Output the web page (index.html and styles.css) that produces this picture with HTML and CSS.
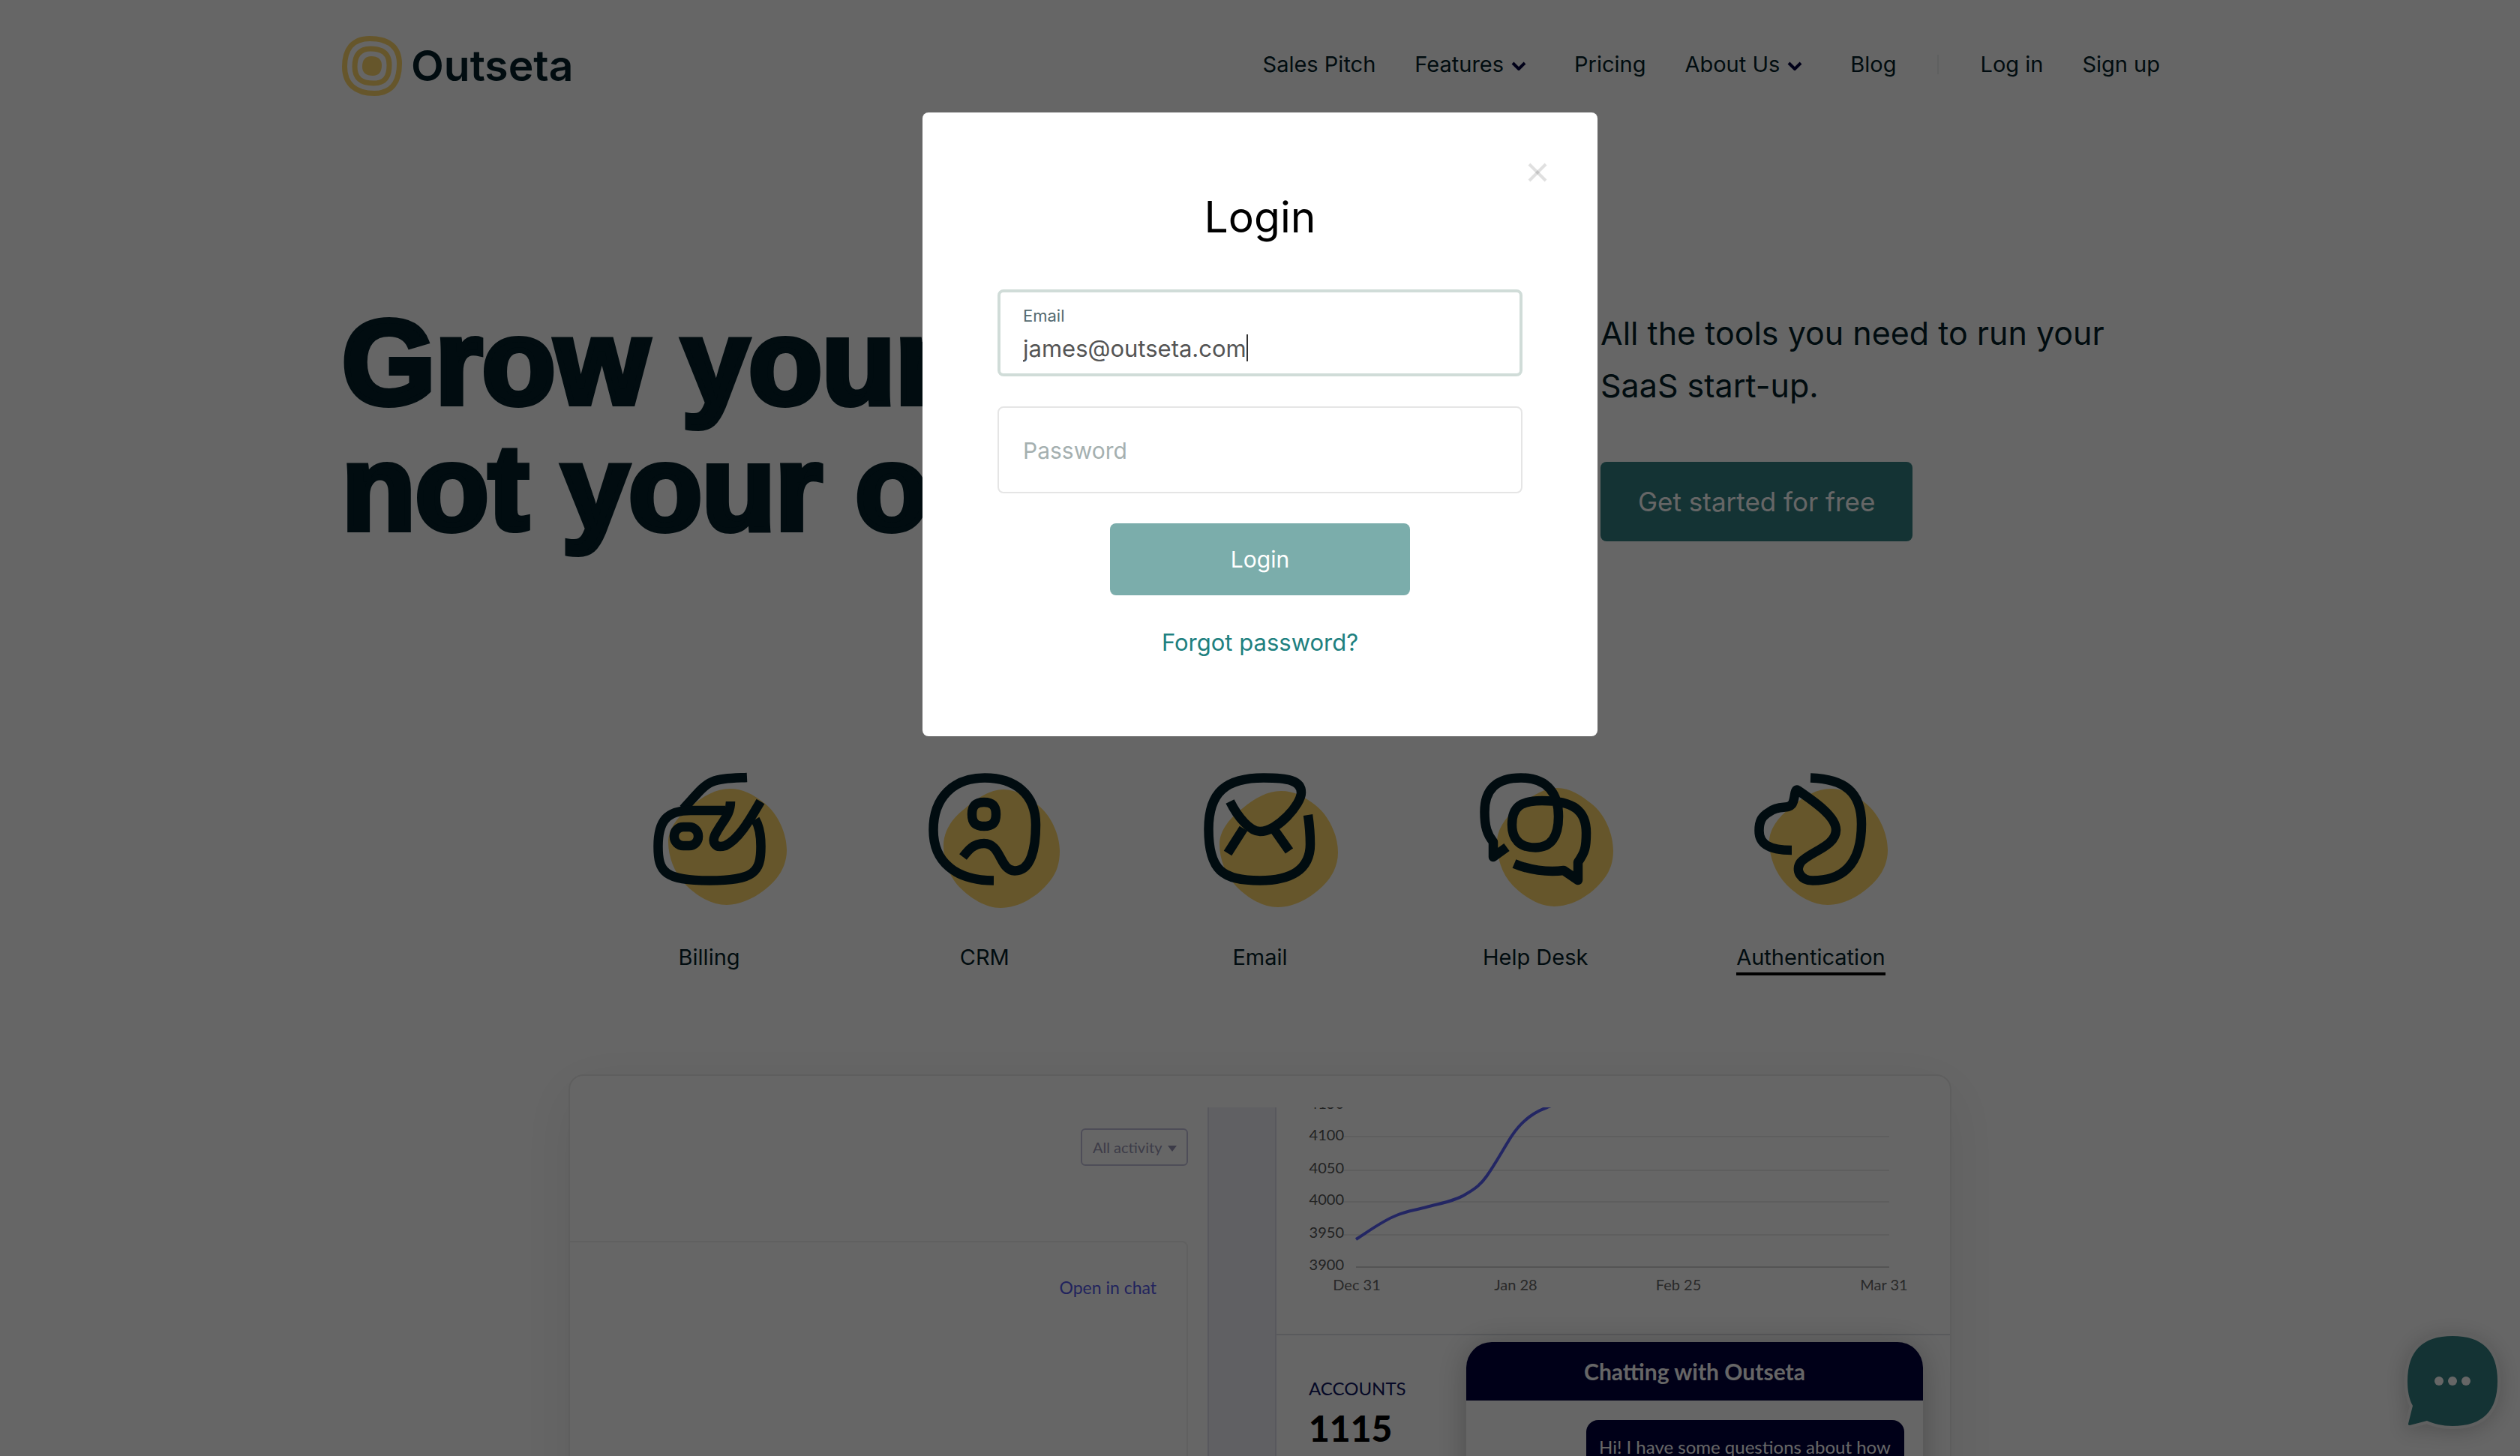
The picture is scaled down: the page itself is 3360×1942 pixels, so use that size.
FILE: index.html
```html
<!DOCTYPE html>
<html lang="en">
<head>
<meta charset="utf-8">
<meta name="viewport" content="width=device-width, initial-scale=1">
<title>Outseta</title>
<link rel="stylesheet" href="styles.css">
</head>
<body>
<div class="page">
  <header class="header">
    <a class="logo" href="#">
      <svg class="logo-mark" viewBox="0 0 80 80" fill="none" stroke="#ffd76b" stroke-width="7" aria-hidden="true">
        <path d="M37 3.500C62 3.500 76.500 14 76.500 37C76.500 62 66 76.500 43 76.500C18 76.500 3.500 64 3.500 41C3.500 18 14 3.500 37 3.500Z"/>
        <path d="M38 17C55 17 63 24 63 39C63 55 57 63 42 63C25 63 17 56 17 41C17 25 24 17 38 17Z"/>
        <path d="M39 27C48 27 53 31 53 39C53 48 49 53 41 53C32 53 27 49 27 41C27 32 31 27 39 27Z" fill="#ffd76b" stroke="none"/>
      </svg>
      <span>Outseta</span>
    </a>
    <nav class="nav">
      <a href="#">Sales Pitch</a>
      <a class="has-menu" href="#">Features <svg class="chevron" viewBox="0 0 20 12" aria-hidden="true"><path d="M2 2L10 10L18 2"/></svg></a>
      <a href="#">Pricing</a>
      <a class="has-menu" href="#">About Us <svg class="chevron" viewBox="0 0 20 12" aria-hidden="true"><path d="M2 2L10 10L18 2"/></svg></a>
      <a href="#">Blog</a>
      <span class="nav-divider"></span>
      <a href="#">Log in</a>
      <a href="#">Sign up</a>
    </nav>
  </header>

  <main>
    <section class="hero">
      <h1 class="hero-title">Grow your start-up,<br>not your overhead.</h1>
      <div class="hero-aside">
        <p class="hero-text">All the tools you need to run your SaaS start-up.</p>
        <a class="cta" href="#">Get started for free</a>
      </div>
    </section>

    <nav class="tabs">
      <a class="tab" href="#">
        <svg class="tab-icon" viewBox="0 0 150 150" aria-hidden="true">
          <path class="blob" d="M102 21C120 21 134 29 148 40C166 54 178 80 178 103C178 117 173 130 164 141C148 160 122 176 98 176C78 176 58 164 43 149C28 133 20 112 20 92C20 73 35 56 51 44C66 31 84 21 102 21Z"/>
          <path d="M125 6C105 7 90 7 78 12C66 17 56 31 40 48"/>
          <path d="M96 50H50C18 50 6.500 64 6.500 98C6.500 132 15 143.500 75 143.500C135 143.500 143.500 132 143.500 98C143.500 84 142 72 136 62"/>
          <rect x="28" y="72" width="32" height="25" rx="12"/>
          <path d="M103 38C103 55 94 62 85 78C76 92 82 101 96 97C115 88 130 60 143 38"/>
        </svg>
        <span class="tab-label">Billing</span>
      </a>
      <a class="tab" href="#">
        <svg class="tab-icon" viewBox="0 0 150 150" aria-hidden="true">
          <path class="blob" transform="translate(-2 3)" d="M102 19C120 19 134 29 148 40C166 54 177 80 177 101C177 117 173 130 164 141C148 162 122 177 98 177C78 177 58 164 43 149C28 133 22 112 22 94C22 73 35 56 51 44C66 31 84 19 102 19Z"/>
          <path d="M87 143.500C35 143 6.500 118 6.500 76C6.500 33 33 6.500 75 6.500C115 6.500 143 28 143 69C143 100 137 130.500 115 130.500C95 130.500 97 94 74 94C60 94 53 103 46 112"/>
          <path d="M74 39C85 39 90 44 90 55C90 66 85 71 74 71C63 71 58 66 58 55C58 44 63 39 74 39Z"/>
        </svg>
        <span class="tab-label">CRM</span>
      </a>
      <a class="tab" href="#">
        <svg class="tab-icon" viewBox="0 0 150 150" aria-hidden="true">
          <path class="blob" transform="translate(1 3)" d="M102 21C120 21 134 29 148 40C166 54 178 80 178 103C178 117 173 130 164 141C148 160 122 176 98 176C78 176 58 164 43 149C28 133 20 112 20 92C20 73 35 56 51 44C66 31 84 21 102 21Z"/>
          <path d="M139 56C141 70 142 80 142 95C142 130 115 143.500 75 143.500C25 143.500 6.500 130 6.500 75C6.500 25 30 6.500 80 6.500C112 6.500 130 10 130 26C130 42 98 78 75 78C62 78 46 60 35 38"/>
          <path d="M53 74L32 107M95 77L114 104"/>
        </svg>
        <span class="tab-label">Email</span>
      </a>
      <a class="tab" href="#">
        <svg class="tab-icon" viewBox="0 0 150 150" aria-hidden="true">
          <path class="blob" transform="translate(2 1)" d="M102 19C120 19 134 29 148 40C166 54 177 80 177 103C177 117 173 130 164 141C148 162 122 177 98 177C78 177 58 164 43 149C28 133 22 112 22 92C22 73 35 56 51 44C66 31 84 19 102 19Z"/>
          <path d="M37 99L19 112V92C11 82 7.500 72 7.500 52C7.500 22 23 6.500 56 6.500C93 6.500 106 30 106 58C106 85 96 99.500 75 99.500C54 99.500 44 88 44 69C44 45 56 37 84 37C126 37 143 50 143 80C143 100 141 106 132 119V143L113 130C91 133 66 129 47 121"/>
        </svg>
        <span class="tab-label">Help Desk</span>
      </a>
      <a class="tab tab-active" href="#">
        <svg class="tab-icon" viewBox="0 0 150 150" aria-hidden="true">
          <path class="blob" d="M102 21C120 21 134 29 148 40C166 54 178 80 178 103C178 117 173 130 164 141C148 160 122 176 98 176C78 176 58 164 43 149C28 133 20 112 20 92C20 73 35 56 51 44C66 31 84 21 102 21Z"/>
          <path d="M75 6.500C120 8 143 25 143 68C143 125 115 143.500 78 143.500C62 143.500 54 130 62 119C74 105 109 98 109 76C109 58 80 38 58 23C53 20 55 36 50 42C44 49 34 42 20 52C10 58 6.500 64 6.500 77C6.500 95 20 103 50 103"/>
        </svg>
        <span class="tab-label">Authentication</span>
      </a>
    </nav>

    <section class="preview">
      <div class="activity">
        <label class="filter">
          <select class="filter-select" aria-label="Activity filter"><option>All activity</option></select>
          <svg class="filter-caret" viewBox="0 0 12 8" aria-hidden="true"><path d="M0 0H12L6 8Z"/></svg>
        </label>
        <div class="activity-panel"><a class="chat-link" href="#">Open in chat</a></div>
      </div>
      <div class="gutter"></div>
      <div class="metrics">
        <svg class="chart" viewBox="0 0 898 302" role="img" aria-label="Accounts chart">
          <g class="chart-grid">
            <path d="M89 39H817M89 84H817M89 126H817M89 170H817"/>
            <path class="chart-axis" d="M106 213H817"/>
          </g>
          <path class="chart-line" d="M106 176C122 166 140 152 160 144C174 138 186 137 200 133C218 128 238 125 252 116C266 108 273 102 280 92C292 75 301 58 313 39C322 25 338 8 361 0L366 -2"/>
          <g class="chart-y">
            <text x="90" y="2">4150</text>
            <text x="90" y="44">4100</text>
            <text x="90" y="88">4050</text>
            <text x="90" y="130">4000</text>
            <text x="90" y="174">3950</text>
            <text x="90" y="217">3900</text>
          </g>
          <g class="chart-x">
            <text x="107" y="244">Dec 31</text>
            <text x="319" y="244">Jan 28</text>
            <text x="536" y="244">Feb 25</text>
            <text x="810" y="244">Mar 31</text>
          </g>
        </svg>
        <div class="metrics-row">
          <div class="stat">
            <div class="stat-label">ACCOUNTS</div>
            <div class="stat-value">1115</div>
          </div>
          <div class="chat">
            <div class="chat-header">Chatting with Outseta</div>
            <div class="chat-body"><p class="chat-message">Hi! I have some questions about how</p></div>
          </div>
        </div>
      </div>
    </section>
  </main>
</div>

<button class="widget" type="button" aria-label="Open chat">
  <svg viewBox="0 0 120 120" aria-hidden="true">
    <path class="widget-bubble" d="M60 0C100 0 120 20 120 60C120 100 100 120 60 120C46 120 35 117 26 113L3 119C1 119 1 118 1 117L7 93C2 84 0 73 0 60C0 20 20 0 60 0Z"/>
    <g fill="#fff"><circle cx="42" cy="60" r="6"/><circle cx="60" cy="60" r="6"/><circle cx="78" cy="60" r="6"/></g>
  </svg>
</button>

<div class="overlay">
  <form class="modal" role="dialog" aria-labelledby="login-title">
    <button class="close" type="button" aria-label="Close">
      <svg viewBox="0 0 26 26" aria-hidden="true"><path d="M2 2L24 24"/><path d="M24 2L2 24"/></svg>
    </button>
    <h2 class="modal-title" id="login-title">Login</h2>
    <div class="field field-focused">
      <label class="field-label" for="email">Email</label>
      <input class="field-input" id="email" type="email" value="james@outseta.com">
      <span class="text-cursor"></span>
    </div>
    <div class="field">
      <input class="field-input" id="password" type="password" placeholder="Password" aria-label="Password">
    </div>
    <button class="submit" type="submit">Login</button>
    <a class="forgot" href="#">Forgot password?</a>
  </form>
</div>
</body>
</html>
```

FILE: styles.css
```css
* {
  box-sizing: border-box;
}

body {
  margin: 0;
  height: 100vh;
  overflow: hidden;
  background: #fff;
  color: #031e28;
  font-family: Inter, "Liberation Sans", sans-serif;
  font-size: 29px;
}

.page {
  height: 100vh;
  overflow: hidden;
}

a {
  color: inherit;
  text-decoration: none;
}

button,
input,
select {
  font-family: inherit;
}

h1,
h2,
p {
  margin: 0;
}

/* Header */

.header {
  display: flex;
  align-items: center;
  justify-content: space-between;
  max-width: 2448px;
  margin: 0 auto;
  padding: 48px 24px 48px 0;
}

.logo {
  display: flex;
  align-items: center;
  gap: 12px;
  font-size: 57px;
  font-weight: 600;
  line-height: 80px;
}

.logo-mark {
  width: 80px;
  height: 80px;
}

.nav {
  display: flex;
  align-items: center;
  gap: 52px;
  padding-bottom: 4px;
  line-height: 36px;
}

.has-menu {
  display: flex;
  align-items: center;
  gap: 10px;
  padding-right: 12px;
}

.chevron {
  width: 20px;
  height: 12px;
  margin-top: 4px;
  fill: none;
  stroke: #00003c;
  stroke-width: 4;
}

.nav-divider {
  width: 2px;
  height: 26px;
  margin: 0 3px;
  background: #eef0f0;
}

/* Hero */

.hero {
  display: flex;
  max-width: 2448px;
  margin: 0 auto;
  padding: 223px 0 296px;
}

.hero-title {
  flex: 1;
  font-family: "Liberation Sans", sans-serif;
  font-size: 160px;
  font-weight: 700;
  line-height: 168px;
  white-space: nowrap;
  -webkit-text-stroke: 8px #031e28;
}

.hero-aside {
  width: 770px;
  padding-top: 10px;
}

.hero-text {
  margin-bottom: 67px;
  font-size: 43px;
  line-height: 70px;
}

.cta {
  display: inline-block;
  padding: 0 50px;
  border-radius: 8px;
  background: #328082;
  color: #fff;
  font-size: 35px;
  line-height: 106px;
}

/* Feature tabs */

.tabs {
  display: grid;
  grid-template-columns: repeat(5, 1fr);
  max-width: 1836px;
  margin: 0 auto 132px;
}

.tab {
  display: flex;
  flex-direction: column;
  align-items: center;
  gap: 78px;
}

.tab-icon {
  width: 150px;
  height: 150px;
  overflow: visible;
  fill: none;
  stroke: #031e28;
  stroke-width: 12.5;
  stroke-linejoin: round;
}

.blob {
  fill: #ffd76b;
  stroke: none;
}

.tab-label {
  padding-bottom: 2px;
  border-bottom: 4px solid transparent;
  line-height: 36px;
}

.tab-active .tab-label {
  border-color: #000;
}

/* Product preview */

.preview {
  display: grid;
  grid-template-columns: 850px 92px 1fr;
  max-width: 1844px;
  min-height: 1000px;
  margin: 0 auto;
  padding-top: 42px;
  border: 2px solid #ebebeb;
  border-radius: 20px;
  box-shadow: 0 20px 80px rgba(0, 0, 0, 0.08);
  font-family: Lato, sans-serif;
}

.activity {
  display: flex;
  flex-direction: column;
  padding: 28px 26px 0 0;
}

.filter {
  position: relative;
  align-self: flex-end;
  width: 143px;
  margin-bottom: 100px;
}

.filter-select {
  display: block;
  width: 100%;
  height: 50px;
  padding: 0 14px;
  border: 2px solid #c3c1dc;
  border-radius: 6px;
  background: none;
  color: #9a97b5;
  font-size: 20px;
  appearance: none;
}

.filter-caret {
  position: absolute;
  top: 23px;
  right: 15px;
  width: 12px;
  height: 8px;
  fill: #9693b4;
}

.activity-panel {
  flex: 1;
  padding: 46px 40px 0 0;
  border: 2px solid #f0f0f0;
  border-width: 2px 2px 0 0;
  border-top-right-radius: 8px;
  text-align: right;
}

.chat-link {
  display: block;
  color: #5359e8;
  font-size: 23px;
  line-height: 28px;
}

.gutter {
  border: 2px solid #dcdce8;
  border-width: 0 2px;
  background: #f0f0f7;
}

.chart {
  display: block;
  width: 100%;
  overflow: hidden;
  font-size: 20px;
}

.chart-grid {
  fill: none;
  stroke: #eaeaea;
  stroke-width: 2;
}

.chart-axis {
  stroke: #d2d2d2;
}

.chart-line {
  fill: none;
  stroke: #5860f8;
  stroke-width: 4;
}

.chart-y {
  fill: #555;
  text-anchor: end;
}

.chart-x {
  fill: #666;
  text-anchor: middle;
}

.metrics-row {
  display: flex;
  justify-content: space-between;
  padding-right: 36px;
  border-top: 2px solid #dfe1e6;
}

.stat {
  padding: 56px 0 0 43px;
}

.stat-label {
  margin-bottom: 8px;
  color: #0d1660;
  font-size: 24px;
  line-height: 30px;
}

.stat-value {
  color: #000;
  font-size: 48px;
  font-weight: 900;
  line-height: 60px;
}

.chat {
  width: 609px;
  min-height: 500px;
  margin-top: 9px;
  border-radius: 34px 34px 0 0;
  background: #fff;
  box-shadow: 0 4px 40px rgba(0, 0, 0, 0.25);
}

.chat-header {
  border-radius: 34px 34px 0 0;
  background: #00003c;
  color: #fff;
  font-size: 30px;
  font-weight: 700;
  line-height: 78px;
  text-align: center;
}

.chat-body {
  padding: 26px 25px 0 160px;
}

.chat-message {
  padding: 20px 17px;
  border-radius: 16px;
  background: #00003c;
  color: #fff;
  font-size: 24px;
  line-height: 32px;
}

/* Chat launcher */

.widget {
  position: fixed;
  right: 30px;
  bottom: 40px;
  width: 120px;
  height: 120px;
  padding: 0;
  border: 0;
  background: none;
}

.widget svg {
  display: block;
  overflow: visible;
  filter: drop-shadow(0 4px 14px rgba(0, 0, 0, 0.2));
}

.widget-bubble {
  fill: #328082;
  stroke: #f0f0f0;
  stroke-width: 8;
  paint-order: stroke;
}

/* Login dialog */

.overlay {
  position: fixed;
  inset: 0;
  padding-top: 150px;
  background: rgba(0, 0, 0, 0.6);
}

.modal {
  position: relative;
  display: flex;
  flex-direction: column;
  align-items: center;
  max-width: 900px;
  margin: 0 auto;
  padding: 100px 100px 102px;
  border-radius: 8px;
  background: #fff;
}

.close {
  position: absolute;
  top: 67px;
  right: 67px;
  width: 26px;
  height: 26px;
  padding: 0;
  border: 0;
  background: none;
}

.close svg {
  display: block;
  fill: none;
  stroke: rgba(0, 0, 0, 0.12);
  stroke-width: 4;
}

.modal-title {
  margin-bottom: 56px;
  color: #000;
  font-size: 57px;
  font-weight: 400;
  line-height: 80px;
}

.field {
  position: relative;
  display: flex;
  flex-direction: column;
  justify-content: center;
  width: 100%;
  height: 116px;
  margin-bottom: 40px;
  padding: 0 32px;
  border: 2px solid #e5e5e5;
  border-radius: 8px;
}

.field-focused {
  padding: 2px 30px 0;
  border: 4px solid #d0dcd8;
}

.field-label {
  margin-bottom: 2px;
  color: #546a6f;
  font-size: 22px;
  line-height: 36px;
}

.field-input {
  width: 100%;
  height: 46px;
  padding: 0;
  border: 0;
  outline: 0;
  background: none;
  color: #555;
  font-size: 31px;
}

.field-input::placeholder {
  color: #a5b0b0;
  font-size: 30px;
  opacity: 1;
}

.text-cursor {
  position: absolute;
  top: 56px;
  left: 328px;
  width: 2px;
  height: 36px;
  background: #333;
}

.submit {
  width: 400px;
  height: 96px;
  margin-bottom: 42px;
  padding: 0;
  border: 0;
  border-radius: 8px;
  background: #7badab;
  color: #fff;
  font-size: 30px;
}

.forgot {
  margin-bottom: 2px;
  color: #20807f;
  font-size: 31px;
  line-height: 42px;
}
```
